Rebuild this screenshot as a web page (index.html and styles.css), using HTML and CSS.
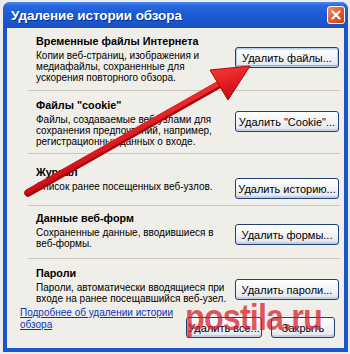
FILE: index.html
```html
<!DOCTYPE html>
<html lang="ru">
<head>
<meta charset="utf-8">
<title>Удаление истории обзора</title>
<link rel="stylesheet" href="styles.css">
</head>
<body>
<div class="window">
  <div class="titlebar">
    <span class="title">Удаление истории обзора</span>
    <span class="close"><svg width="16" height="16" viewBox="0 0 16 16"><path d="M4.5 4.5 L11.5 11.5 M11.5 4.5 L4.5 11.5" stroke="#fff" stroke-width="2.2" stroke-linecap="round"/></svg></span>
  </div>
  <div class="client">
    <div class="sections">
      <div class="section s-files">
        <div class="head">Временные файлы Интернета</div>
        <div class="row">
          <div class="desc">Копии веб-страниц, изображения и<br>медиафайлы, сохраненные для<br>ускорения повторного обзора.</div>
          <button class="btn focus">Удалить файлы...</button>
        </div>
      </div>
      <div class="section s-cookie">
        <div class="head">Файлы "cookie"</div>
        <div class="row">
          <div class="desc">Файлы, создаваемые веб-узлами для<br>сохранения предпочтений, например,<br>регистрационных данных о входе.</div>
          <button class="btn">Удалить "Cookie"...</button>
        </div>
      </div>
      <div class="section s-history">
        <div class="head">Журнал</div>
        <div class="row">
          <div class="desc">Список ранее посещенных веб-узлов.</div>
          <button class="btn">Удалить историю...</button>
        </div>
      </div>
      <div class="section s-forms">
        <div class="head">Данные веб-форм</div>
        <div class="row">
          <div class="desc">Сохраненные данные, вводившиеся в<br>веб-формы.</div>
          <button class="btn">Удалить формы...</button>
        </div>
      </div>
      <div class="section s-passwords">
        <div class="head">Пароли</div>
        <div class="row">
          <div class="desc">Пароли, автоматически вводящиеся при<br>входе на ранее посещавшийся веб-узел.</div>
          <button class="btn">Удалить пароли...</button>
        </div>
      </div>
    </div>
    <div class="footer">
      <a class="link" href="#">Подробнее об удалении истории<br>обзора</a>
      <div class="actions">
        <button class="btn all">Удалить все...</button>
        <button class="btn closebtn">Закрыть</button>
      </div>
    </div>
  </div>
  <svg class="arrow" width="350" height="354" viewBox="0 0 350 354">
    <defs>
      <linearGradient id="ag" x1="0" y1="0" x2="0.3" y2="1">
        <stop offset="0" stop-color="#ff3a3a"/>
        <stop offset="1" stop-color="#c80a12"/>
      </linearGradient>
    </defs>
    <line x1="28" y1="193" x2="222" y2="83" stroke="#a8070e" stroke-width="7.5" stroke-linecap="round"/>
    <line x1="28" y1="191.5" x2="222" y2="81.5" stroke="url(#ag)" stroke-width="5" stroke-linecap="round"/>
    <polygon points="250,66 210,70 228,100" fill="url(#ag)" stroke="#a8070e" stroke-width="1"/>
  </svg>
  <div class="watermark">postila.ru</div>
</div>
</body>
</html>
```
FILE: styles.css
```css
html, body {
  margin: 0;
  padding: 0;
}
body {
  width: 350px;
  height: 354px;
  background: #ececec;
  font-family: "Liberation Sans", Arial, sans-serif;
  font-size: 10px;
  color: #000;
  overflow: hidden;
}
.window {
  position: relative;
  margin: 2px 2px 0 3px;
  width: 345px;
  height: 350px;
  background: #1b55cc;
  border-radius: 7px 7px 0 0;
  display: flex;
  flex-direction: column;
  padding: 0 4px 4px 4px;
  box-sizing: border-box;
}
.titlebar {
  height: 26px;
  margin: 0 -4px;
  padding: 0 4px 0 8px;
  border-radius: 7px 7px 0 0;
  background: linear-gradient(#4b8cf0 0%, #2a6ae0 12%, #1d5ad4 45%, #1a55cd 80%, #1a4fc2 100%);
  display: flex;
  align-items: center;
  justify-content: space-between;
}
.title {
  color: #fff;
  font-weight: bold;
  font-size: 13.5px;
  letter-spacing: -0.1px;
  text-shadow: 1px 1px 0 #0b2f8a;
}
.close {
  width: 16px;
  height: 16px;
  border: 1px solid #fff;
  border-radius: 3px;
  background: linear-gradient(135deg, #f2926c 0%, #e15a30 50%, #c8401a 100%);
  margin-right: -1px;
  display: flex;
}
.client {
  flex: 1;
  background: #efeee9;
  display: flex;
  flex-direction: column;
  padding: 0 4px 0 13px;
}
.sections {
  margin-left: 8px;
}
.section {
  padding-left: 8px;
  border-bottom: 1px solid #c9c7bd;
}
.s-files { padding-top: 6px; padding-bottom: 7px; }
.s-cookie { padding-top: 7px; padding-bottom: 6px; }
.s-history { padding-top: 11px; padding-bottom: 6px; }
.s-forms { padding-top: 5px; padding-bottom: 9px; }
.s-passwords { padding-top: 7px; border-bottom: none; }
.head {
  font-weight: bold;
  font-size: 10.8px;
  line-height: 14px;
  margin-bottom: 2px;
  white-space: nowrap;
}
.row {
  display: flex;
  justify-content: space-between;
  align-items: flex-start;
}
.desc {
  line-height: 11px;
  white-space: nowrap;
}
.btn {
  font-family: "Liberation Sans", Arial, sans-serif;
  font-size: 11px;
  color: #000;
  width: 104px;
  height: 21px;
  margin-top: -3px;
  margin-right: 1px;
  padding: 0;
  border: 1px solid #233f78;
  border-radius: 3px;
  background: linear-gradient(#ffffff 0%, #f2f3f6 50%, #dfe4ee 100%);
  box-shadow: inset 0 -2px 0 #c6cfe0, inset 0 1px 0 #fff;
  flex: none;
}
.btn.focus {
  box-shadow: inset 0 0 0 1px #b9cff2, inset 0 -2px 0 #8eaee2, inset 0 2px 0 #cfe0fb;
}
.footer {
  margin-top: auto;
  display: flex;
  justify-content: space-between;
  align-items: flex-start;
  padding-bottom: 10px;
}
.link {
  color: #0b35b8;
  text-decoration: underline;
  line-height: 12px;
  white-space: nowrap;
}
.actions {
  display: flex;
  gap: 9px;
  margin-top: 10px;
  margin-right: 5px;
}
.btn.all {
  width: 76px;
  margin: 0;
}
.btn.closebtn {
  width: 64px;
  margin: 0;
}
.arrow {
  position: absolute;
  left: -3px;
  top: -2px;
  pointer-events: none;
}
.watermark {
  position: absolute;
  left: 182px;
  top: 304px;
  font-family: "Liberation Sans", Arial, sans-serif;
  font-weight: bold;
  font-size: 36px;
  line-height: 24px;
  letter-spacing: -1px;
  color: rgba(214, 24, 40, 0.72);
  transform: scaleX(0.9);
  transform-origin: left top;
  pointer-events: none;
}
```
